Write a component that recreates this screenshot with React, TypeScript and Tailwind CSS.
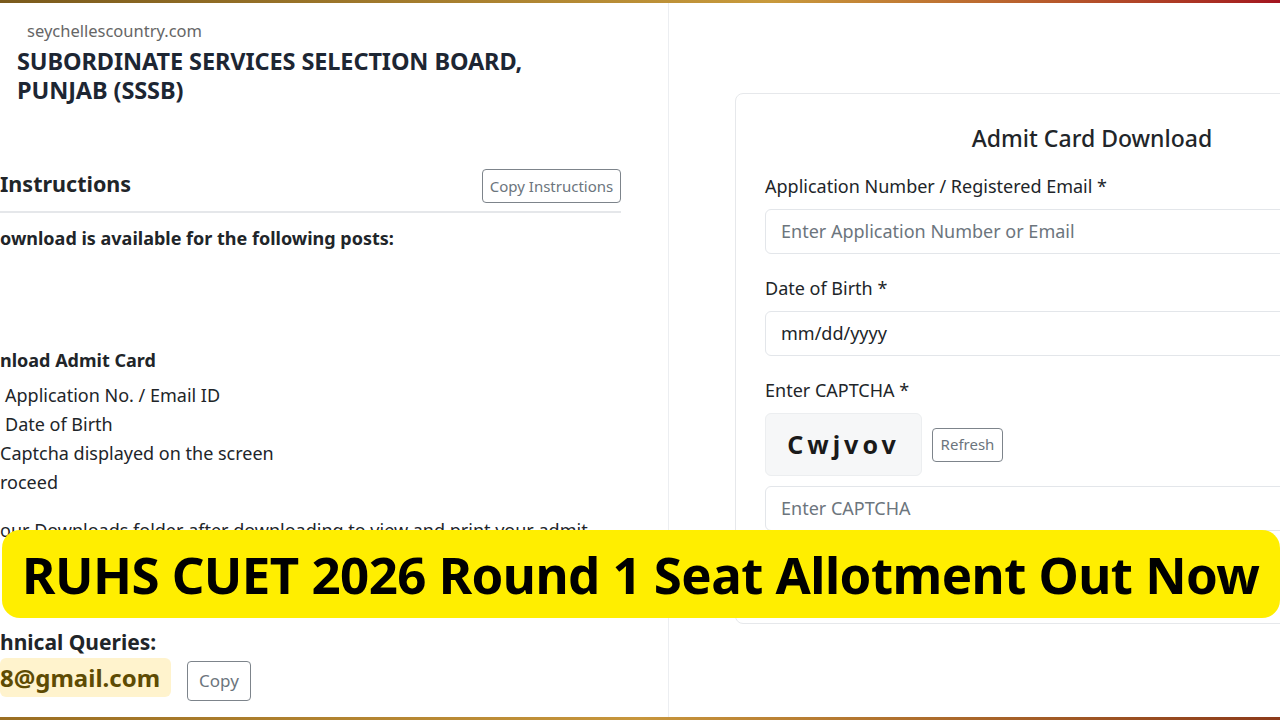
import React from 'react';

// Admit card page of the SSSB portal, with the announcement strip laid over it
const steps = [
  { text: 'Application No. / Email ID', indent: 'pl-[5px]' },
  { text: 'Date of Birth', indent: 'pl-[5px]' },
  { text: 'Captcha displayed on the screen', indent: 'pl-0' },
  { text: 'roceed', indent: 'pl-0' },
];

const Field = ({ label, placeholder, value }: { label: string; placeholder?: string; value?: string }) => (
  <div className="flex flex-col">
    <label className="text-[18px] leading-[24px] text-[#212529]">{label}</label>
    <div className="mt-[11px] h-[45px] w-full rounded-md border border-[#e3e6ea] flex items-center px-[15px] text-[18px]">
      {value ? <span className="text-[#212529]">{value}</span> : <span className="text-[#6c757d]">{placeholder}</span>}
    </div>
  </div>
);

const App: React.FC = () => {
  return (
    <div
      className="relative w-[1280px] h-[720px] overflow-hidden bg-white flex flex-col"
      style={{ fontFamily: '"Noto Sans", "Open Sans", sans-serif' }}
    >
      <div className="h-[3px] w-full bg-gradient-to-r from-[#7a5a1c] via-[#c89a3c] via-60% to-[#a3121f]" />

      <div className="flex flex-1 min-h-0">
        {/* left: board name and instructions */}
        <div className="w-[669px] shrink-0 border-r border-[#eceef1] flex flex-col">
          <div className="mt-[18px] pl-[27px] text-[16.5px] leading-[20px] text-[#666]">seychellescountry.com</div>
          <h1 className="mt-[6px] pl-[17px] text-[23.5px] leading-[29px] font-bold text-[#1d2633] tracking-[-0.1px]">
            SUBORDINATE SERVICES SELECTION BOARD,
            <br />
            PUNJAB (SSSB)
          </h1>

          <div className="mt-[64px] w-[621px] flex items-center justify-between pb-[8px] border-b-2 border-[#e5e7ea]">
            <h2 className="text-[21.5px] leading-[30px] font-bold text-[#212529] -mt-[4px]">Instructions</h2>
            <button className="h-[34px] w-[139px] rounded border border-[#7d848b] text-[15px] text-[#6c757d]">
              Copy Instructions
            </button>
          </div>

          <p className="mt-[13px] text-[18px] leading-[24px] font-bold text-[#212529]">
            ownload is available for the following posts:
          </p>

          <p className="mt-[98px] text-[18px] leading-[24px] font-bold text-[#212529]">nload Admit Card</p>
          <ul className="mt-[9px] flex flex-col">
            {steps.map((s) => (
              <li key={s.text} className={`text-[18px] leading-[29px] text-[#212529] ${s.indent}`}>
                {s.text}
              </li>
            ))}
          </ul>
          <p className="mt-[19px] text-[18px] leading-[29px] text-[#212529] whitespace-nowrap">
            our Downloads folder after downloading to view and print your admit
          </p>

          <p className="mt-[85px] text-[21px] leading-[24px] font-bold text-[#212529]">hnical Queries:</p>
          <div className="mt-[4px] flex items-start gap-[16px]">
            <span className="h-[39px] w-[171px] rounded-md bg-[#fff3cd] flex items-center text-[24px] font-bold text-[#5e4b03]">
              8@gmail.com
            </span>
            <button className="mt-[3px] h-[40px] w-[64px] rounded border border-[#7d848b] text-[17px] text-[#6c757d]">
              Copy
            </button>
          </div>
        </div>

        {/* right: admit card form */}
        <div className="flex-1 pl-[66px] pt-[90px]">
          <div className="w-[714px] h-[531px] shrink-0 rounded-lg border border-[#e6e8eb] pt-[28px] px-[29px]">
            <h3 className="text-center text-[23px] leading-[32px] font-medium text-[#212529]">Admit Card Download</h3>
            <div className="mt-[20px]">
              <Field label="Application Number / Registered Email *" placeholder="Enter Application Number or Email" />
            </div>
            <div className="mt-[22px]">
              <Field label="Date of Birth *" value="mm/dd/yyyy" />
            </div>
            <div className="mt-[22px] flex flex-col">
              <label className="text-[18px] leading-[24px] text-[#212529]">Enter CAPTCHA *</label>
              <div className="mt-[11px] flex items-center gap-[10px]">
                <div className="h-[63px] w-[157px] rounded-md border border-[#eceef0] bg-[#f6f7f8] flex items-center justify-center text-[25px] font-bold tracking-[4px] text-[#1a1a1a]">
                  Cwjvov
                </div>
                <button className="h-[34px] w-[71px] rounded border border-[#7d848b] text-[15px] text-[#6c757d]">
                  Refresh
                </button>
              </div>
              <div className="mt-[10px] h-[45px] w-full rounded-md border border-[#e3e6ea] flex items-center px-[15px] text-[18px] text-[#6c757d]">
                Enter CAPTCHA
              </div>
            </div>
          </div>
        </div>
      </div>

      <div className="h-[3px] w-full bg-gradient-to-r from-[#9a6e22] via-[#c7963c] via-50% to-[#8c3a1a]" />

      {/* announcement strip */}
      <div className="absolute left-[2px] top-[530px] w-[1278px] h-[88px] rounded-[18px] bg-[#ffee00] flex items-center pl-[20px]">
        <span className="text-[51px] font-bold text-black tracking-[-0.55px] whitespace-nowrap">
          RUHS CUET 2026 Round 1 Seat Allotment Out Now
        </span>
      </div>
    </div>
  );
};

export default App;
